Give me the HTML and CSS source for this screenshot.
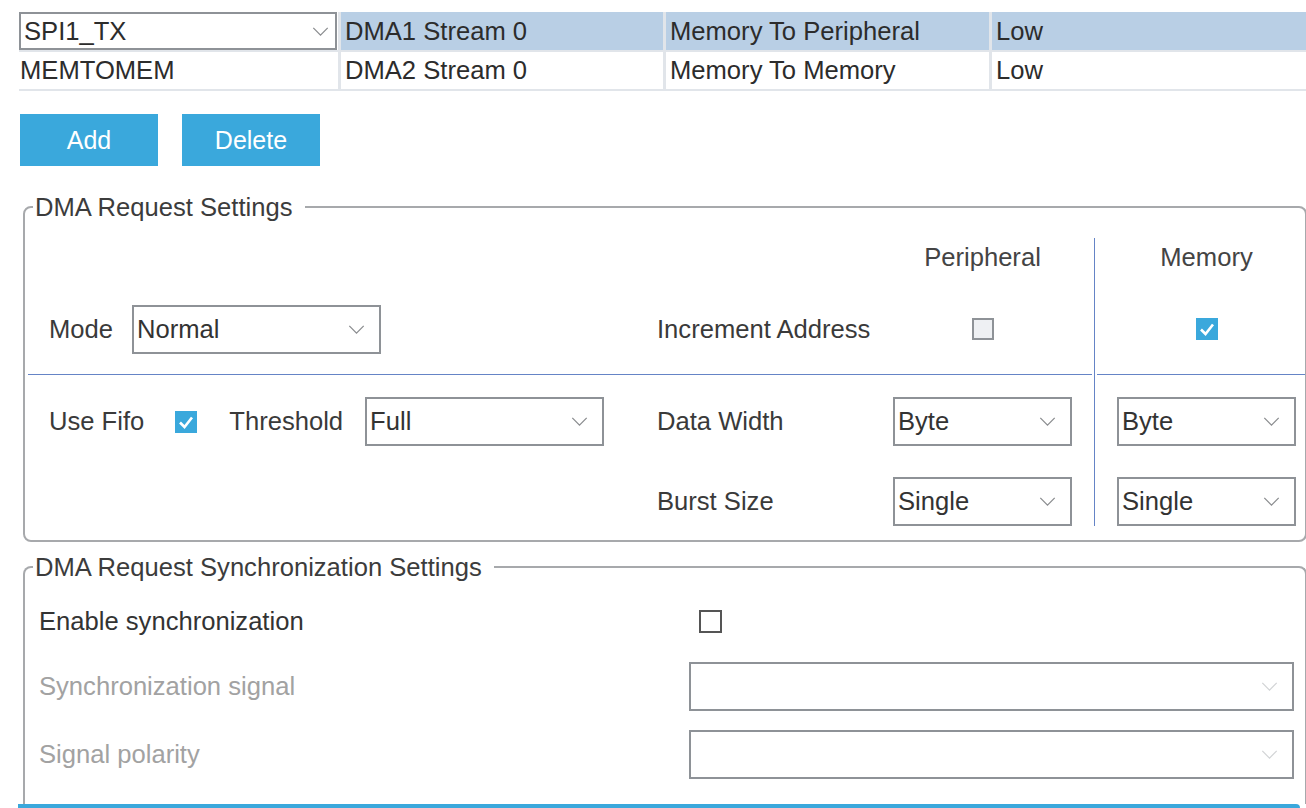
FILE: index.html
```html
<!DOCTYPE html>
<html lang="en">
<head>
  <meta charset="UTF-8">
  <title>DMA Settings</title>
  <link rel="stylesheet" href="styles.css">
</head>
<body>
  <div class="page">

    <div class="req-table">
      <div class="req-row selected">
        <div class="cell first">
          <div class="select compact">
            <span>SPI1_TX</span>
            <svg class="chevron" viewBox="0 0 18 10"><path d="M1 1 L9 9 L17 1"/></svg>
          </div>
        </div>
        <div class="cell">DMA1 Stream 0</div>
        <div class="cell">Memory To Peripheral</div>
        <div class="cell">Low</div>
      </div>
      <div class="req-row">
        <div class="cell first">MEMTOMEM</div>
        <div class="cell">DMA2 Stream 0</div>
        <div class="cell">Memory To Memory</div>
        <div class="cell">Low</div>
      </div>
    </div>

    <div class="actions">
      <button type="button" class="btn">Add</button>
      <button type="button" class="btn">Delete</button>
    </div>

    <fieldset class="group">
      <legend>DMA Request Settings</legend>
      <div class="settings">
        <!-- column headers -->
        <div class="s-cell c-per head">Peripheral</div>
        <div class="s-cell c-mem mem head">Memory</div>

        <!-- mode / increment address -->
        <div class="s-cell c-left r2">
          <span class="label">Mode</span>
          <div class="select mode-select">
            <span>Normal</span>
            <svg class="chevron" viewBox="0 0 18 10"><path d="M1 1 L9 9 L17 1"/></svg>
          </div>
        </div>
        <div class="s-cell c-lbl r2">Increment Address</div>
        <div class="s-cell c-per r2 center"><span class="check off"></span></div>
        <div class="s-cell c-mem mem r2 center">
          <span class="check on"><svg viewBox="0 0 22 22"><path d="M5 11.5 L9.5 16 L17 6.5"/></svg></span>
        </div>

        <div class="rule"></div>
        <div class="rule-mem mem"></div>

        <!-- fifo / data width -->
        <div class="s-cell c-left r4 top">
          <div class="line">
            <span class="label">Use Fifo</span>
            <span class="check on fifo-check"><svg viewBox="0 0 22 22"><path d="M5 11.5 L9.5 16 L17 6.5"/></svg></span>
            <span class="label threshold">Threshold</span>
            <div class="select threshold-select">
              <span>Full</span>
              <svg class="chevron" viewBox="0 0 18 10"><path d="M1 1 L9 9 L17 1"/></svg>
            </div>
          </div>
        </div>
        <div class="s-cell c-lbl r4 top"><div class="line">Data Width</div></div>
        <div class="s-cell c-per r4 top">
          <div class="select narrow">
            <span>Byte</span>
            <svg class="chevron" viewBox="0 0 18 10"><path d="M1 1 L9 9 L17 1"/></svg>
          </div>
        </div>
        <div class="s-cell c-mem mem r4 top">
          <div class="select narrow">
            <span>Byte</span>
            <svg class="chevron" viewBox="0 0 18 10"><path d="M1 1 L9 9 L17 1"/></svg>
          </div>
        </div>

        <!-- burst size -->
        <div class="s-cell c-lbl r5">Burst Size</div>
        <div class="s-cell c-per r5">
          <div class="select narrow">
            <span>Single</span>
            <svg class="chevron" viewBox="0 0 18 10"><path d="M1 1 L9 9 L17 1"/></svg>
          </div>
        </div>
        <div class="s-cell c-mem mem r5">
          <div class="select narrow">
            <span>Single</span>
            <svg class="chevron" viewBox="0 0 18 10"><path d="M1 1 L9 9 L17 1"/></svg>
          </div>
        </div>
      </div>
    </fieldset>

    <fieldset class="group sync-group">
      <legend>DMA Request Synchronization Settings</legend>
      <div class="sync">
        <div class="sync-label">Enable synchronization</div>
        <div class="sync-ctrl"><span class="check empty"></span></div>

        <div class="sync-label disabled">Synchronization signal</div>
        <div class="sync-ctrl">
          <div class="select wide disabled">
            <span></span>
            <svg class="chevron" viewBox="0 0 18 10"><path d="M1 1 L9 9 L17 1"/></svg>
          </div>
        </div>

        <div class="sync-label disabled">Signal polarity</div>
        <div class="sync-ctrl">
          <div class="select wide disabled">
            <span></span>
            <svg class="chevron" viewBox="0 0 18 10"><path d="M1 1 L9 9 L17 1"/></svg>
          </div>
        </div>
      </div>
    </fieldset>

    <div class="bottom-bar"></div>
  </div>
</body>
</html>
```

FILE: styles.css
```css
body {
  margin: 0;
  background: #fff;
  font-family: 'Liberation Sans', Arial, sans-serif;
  font-size: 25.6px;
  color: #3a3a3a;
  overflow: hidden;
}

.page {
  width: 1306px;
  height: 808px;
  padding-top: 12px;
  box-sizing: border-box;
}

/* request table */
.req-table {
  margin-left: 19px;
}

.req-row {
  display: grid;
  grid-template-columns: 319px 325px 326px 1fr;
  height: 37px;
  border-bottom: 2px solid #e1e5ea;
}

.req-row:first-child {
  height: 38px;
}

.cell {
  display: flex;
  align-items: center;
  padding-left: 4px;
  border-left: 3px solid #e1e5ea;
  color: #2c2c2c;
  white-space: nowrap;
}

.cell.first {
  border-left: none;
  padding-left: 1px;
}

.req-row.selected .cell {
  background: #b9cfe5;
}

.req-row.selected .cell.first {
  background: #fff;
  padding: 0 1px 0 0;
}

/* buttons */
.actions {
  display: flex;
  gap: 24px;
  margin: 23px 0 0 20px;
}

.btn {
  width: 138px;
  height: 52px;
  border: none;
  background: #3aa8dc;
  color: #fff;
  font-family: inherit;
  font-size: 25px;
  cursor: pointer;
}

/* select boxes */
.select {
  display: flex;
  align-items: center;
  justify-content: space-between;
  box-sizing: border-box;
  height: 49px;
  padding: 0 14px 0 3px;
  border: 2px solid #8e9297;
  background: #fff;
  color: #333;
  white-space: nowrap;
}

.select.compact {
  width: 318px;
  height: 38px;
  padding-right: 6px;
  color: #2c2c2c;
}

.chevron {
  width: 17px;
  height: 9px;
  flex: none;
}

.chevron path {
  fill: none;
  stroke: #8a8c8f;
  stroke-width: 1.4;
}

.select.disabled .chevron path {
  stroke: #d2d4d6;
}

.mode-select { width: 249px; margin-left: 19px; }
.threshold-select { width: 239px; }
.narrow { width: 179px; }
.wide { width: 605px; }

/* checkboxes */
.check {
  display: inline-flex;
  width: 22px;
  height: 22px;
  box-sizing: border-box;
  flex: none;
}

.check.on {
  background: #3aa8dc;
}

.check.on svg {
  width: 22px;
  height: 22px;
}

.check.on path {
  fill: none;
  stroke: #fff;
  stroke-width: 2.6;
}

.check.off {
  border: 2px solid #8e9297;
  background: #eef0f3;
}

.check.empty {
  width: 23px;
  height: 23px;
  border: 2px solid #555;
  background: #fff;
}

/* fieldset groups */
.group {
  margin: 26px 0 0 23px;
  width: 1284px;
  box-sizing: border-box;
  padding: 16px 0 14px 3px;
  border: 2px solid #a7a9ac;
  border-radius: 8px;
  min-inline-size: 0;
}

.group legend {
  margin-left: 5px;
  padding: 0 12px 0 2px;
  line-height: 30px;
  color: #3c3c3c;
}

.settings {
  display: grid;
  grid-template-columns: 629px 236px 179px 22px 1fr;
  grid-template-rows: 46px 90px 1px 102px 49px;
}

.s-cell {
  display: flex;
  align-items: center;
  white-space: nowrap;
}

.c-left { grid-column: 1; padding-left: 21px; }
.c-lbl { grid-column: 2; }
.c-per { grid-column: 3; }
.c-mem { grid-column: 5; padding-left: 22px; }

.mem {
  border-left: 1px solid #6584c6;
}

.head {
  grid-row: 1;
  justify-content: center;
  align-items: flex-start;
  padding-top: 5px;
  color: #444;
}

.c-mem.head {
  padding-right: 9px;
}

.r2 { grid-row: 2; }
.r4 { grid-row: 4; }
.r5 { grid-row: 5; }

.center { justify-content: center; }
.c-mem.center { padding-right: 9px; }

.top {
  align-items: flex-start;
  padding-top: 22px;
}

.line {
  display: flex;
  align-items: center;
  height: 49px;
}

.fifo-check { margin-left: 31px; }
.threshold { margin: 0 22px 0 32px; }

.rule {
  grid-row: 3;
  grid-column: 1 / 5;
  background: #6584c6;
  margin-right: 2px;
}

.rule-mem {
  grid-row: 3;
  grid-column: 5;
  background: #6584c6;
  background-clip: content-box;
  padding-left: 2px;
}

/* synchronization group */
.sync-group {
  margin-top: 10px;
  padding: 15px 0 28px 3px;
  border-bottom: none;
  border-radius: 8px 8px 0 0;
}

.sync {
  display: grid;
  grid-template-columns: 650px 605px;
  grid-template-rows: 49px 49px 49px;
  row-gap: 16px;
  padding-left: 11px;
}

.sync .sync-label:nth-child(5),
.sync .sync-ctrl:nth-child(6) {
  margin-top: 5px;
}

.sync-label {
  display: flex;
  align-items: center;
  color: #333;
}

.sync-label.disabled {
  color: #a2a2a2;
}

.sync-ctrl {
  display: flex;
  align-items: center;
}

.sync-ctrl .check.empty {
  margin-left: 10px;
}

.bottom-bar {
  margin-left: 18px;
  width: 1282px;
  height: 10px;
  background: #3aa8dc;
  border-top-right-radius: 4px;
}
```
